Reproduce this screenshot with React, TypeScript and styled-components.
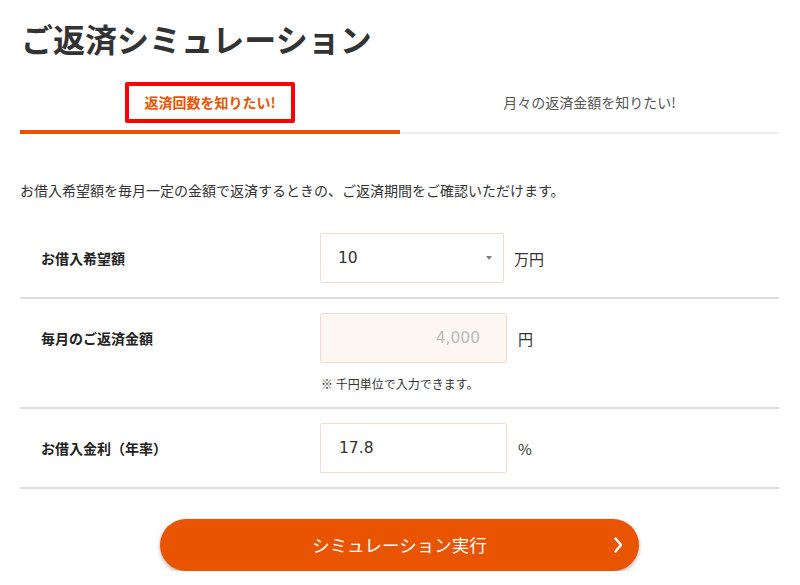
import React from "react";
import styled, { createGlobalStyle } from "styled-components";

const Global = createGlobalStyle`
  html, body { margin: 0; padding: 0; background: #fff; }
  body {
    font-family: "Noto Sans CJK JP", "Noto Sans", sans-serif;
    color: #333;
  }
  * { box-sizing: border-box; }
`;

const Page = styled.div`
  width: 800px;
  padding: 0 21px 0 20px;
`;

const Title = styled.h1`
  margin: 14px 0 0 1px;
  font-size: 32px;
  line-height: 48px;
  font-weight: 700;
  color: #333;
`;

const Tabs = styled.div`
  display: grid;
  grid-template-columns: 380px 1fr;
`;

const Tab = styled.div<{ $active?: boolean }>`
  height: 72px;
  padding-top: 20px;
  display: flex;
  justify-content: center;
  align-items: flex-start;
  border-bottom: ${(p) => (p.$active ? "4px solid #e85400" : "2px solid #eeeeee")};
`;

const TabLabel = styled.span<{ $active?: boolean }>`
  display: inline-block;
  padding: 6px 15px;
  line-height: 21px;
  font-size: 14px;
  font-weight: ${(p) => (p.$active ? 700 : 400)};
  color: ${(p) => (p.$active ? "#e85400" : "#555")};
  border: 4px solid ${(p) => (p.$active ? "#ff0000" : "transparent")};
  border-radius: 2px;
`;

const Lead = styled.p`
  margin: 46px 0 19px 0;
  font-size: 14px;
  line-height: 20px;
  color: #333;
`;

const Row = styled.div`
  display: grid;
  grid-template-columns: 300px 1fr;
  align-items: start;
  padding: 14px 0;
  border-bottom: 2px solid #dddddd;
`;

const Label = styled.div`
  padding-left: 21px;
  line-height: 50px;
  font-size: 14px;
  font-weight: 700;
  color: #222;
`;

const Field = styled.div`
  display: flex;
  flex-direction: column;
`;

const Line = styled.div`
  display: flex;
  align-items: center;
`;

const SelectBox = styled.div`
  width: 184px;
  height: 50px;
  border: 1px solid #f5dccf;
  border-radius: 2px;
  background: #fff;
  display: flex;
  align-items: center;
  justify-content: space-between;
  padding: 0 11px 0 17px;
  font-family: "DejaVu Sans", sans-serif;
  font-size: 15.5px;
  color: #333;
`;

const Caret = styled.span`
  width: 0;
  height: 0;
  border-left: 3.5px solid transparent;
  border-right: 3.5px solid transparent;
  border-top: 4px solid #8b7b73;
`;

const TextInput = styled.input<{ $disabled?: boolean }>`
  width: 187px;
  height: 50px;
  border: 1px solid #f5dccf;
  border-radius: 2px;
  outline: none;
  margin: 0;
  background: ${(p) => (p.$disabled ? "#fdf6f3" : "#fff")};
  color: ${(p) => (p.$disabled ? "#bbbbbb" : "#333")};
  text-align: ${(p) => (p.$disabled ? "right" : "left")};
  padding: ${(p) => (p.$disabled ? "0 26px 0 0" : "0 0 0 18px")};
  font-family: "DejaVu Sans", sans-serif;
  font-size: 15.5px;
`;

const Unit = styled.span<{ $gap: number }>`
  margin-left: ${(p) => p.$gap}px;
  font-size: 15px;
  color: #333;
`;

const Note = styled.div`
  margin-top: 12px;
  line-height: 18px;
  font-size: 12px;
  color: #333;
  padding-left: 1px;
`;

const Button = styled.button`
  display: grid;
  grid-template-columns: 1fr auto 1fr;
  align-items: center;
  width: 479px;
  height: 52px;
  margin: 30px auto 0;
  padding: 0 16px;
  border: none;
  border-radius: 26px;
  background: #e85400;
  color: #fff;
  font-family: "Noto Sans CJK JP", sans-serif;
  font-size: 17.5px;
  box-shadow: 0 2px 4px rgba(0, 0, 0, 0.3);
  cursor: pointer;
`;

const ButtonText = styled.span`
  grid-column: 2;
  line-height: 24px;
`;

const Chevron = styled.svg`
  grid-column: 3;
  justify-self: end;
`;

export default function App() {
  return (
    <>
      <Global />
      <Page>
        <Title>ご返済シミュレーション</Title>
        <Tabs>
          <Tab $active>
            <TabLabel $active>返済回数を知りたい!</TabLabel>
          </Tab>
          <Tab>
            <TabLabel>月々の返済金額を知りたい!</TabLabel>
          </Tab>
        </Tabs>
        <Lead>お借入希望額を毎月一定の金額で返済するときの、ご返済期間をご確認いただけます。</Lead>

        <Row>
          <Label>お借入希望額</Label>
          <Field>
            <Line>
              <SelectBox role="listbox">
                <span>10</span>
                <Caret />
              </SelectBox>
              <Unit $gap={10}>万円</Unit>
            </Line>
          </Field>
        </Row>

        <Row>
          <Label>毎月のご返済金額</Label>
          <Field>
            <Line>
              <TextInput $disabled readOnly value="4,000" />
              <Unit $gap={11}>円</Unit>
            </Line>
            <Note>※ 千円単位で入力できます。</Note>
          </Field>
        </Row>

        <Row>
          <Label>お借入金利（年率）</Label>
          <Field>
            <Line>
              <TextInput readOnly value="17.8" />
              <Unit $gap={11}>%</Unit>
            </Line>
          </Field>
        </Row>

        <Button type="button">
          <ButtonText>シミュレーション実行</ButtonText>
          <Chevron width="9" height="16" viewBox="0 0 9 16">
            <path d="M1.5 1.5 L7 8 L1.5 14.5" fill="none" stroke="#fff" strokeWidth="2.4" strokeLinecap="round" strokeLinejoin="round" />
          </Chevron>
        </Button>
      </Page>
    </>
  );
}
